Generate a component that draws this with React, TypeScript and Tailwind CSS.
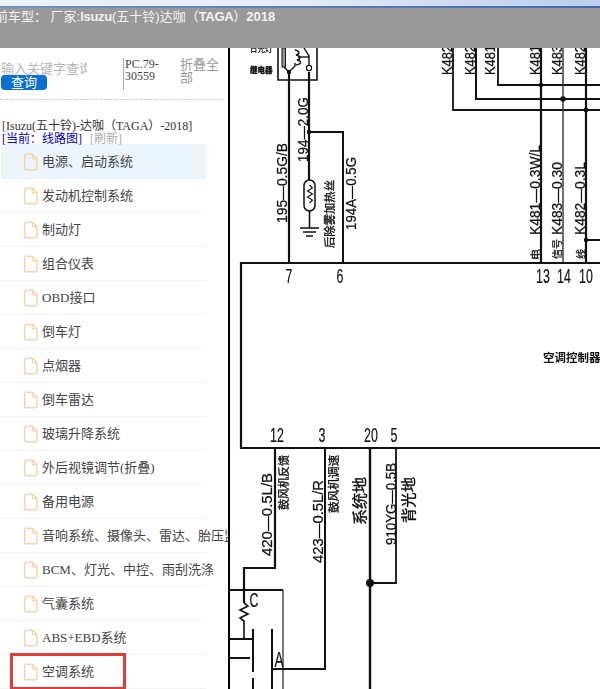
const items = [
  "电源、启动系统",
  "发动机控制系统",
  "制动灯",
  "组合仪表",
  "OBD接口",
  "倒车灯",
  "点烟器",
  "倒车雷达",
  "玻璃升降系统",
  "外后视镜调节(折叠)",
  "备用电源",
  "音响系统、摄像头、雷达、胎压监测",
  "BCM、灯光、中控、雨刮洗涤",
  "气囊系统",
  "ABS+EBD系统",
  "空调系统",
];

function FileIcon() {
  return (
    <svg width="16" height="18" viewBox="0 0 16 18" fill="none" className="shrink-0">
      <path
        d="M3.5 1.2h6l4.5 4.6v9.2a1.8 1.8 0 0 1-1.8 1.8H3.5a1.8 1.8 0 0 1-1.8-1.8V3a1.8 1.8 0 0 1 1.8-1.8z"
        stroke="#f8d5ad"
        strokeWidth="1.6"
      />
      <path d="M9.5 1.2v4.6H14" stroke="#f8d5ad" strokeWidth="1.4" />
    </svg>
  );
}

function V({ x, y, len, size = 15, children, heavy = 0.25 }: { x: number; y: number; len?: number; size?: number; children: string; heavy?: number }) {
  return (
    <text
      transform={`translate(${x} ${y}) rotate(-90)`}
      fontSize={size}
      fill="#111"
      stroke="#111"
      strokeWidth={heavy}
      fontFamily="'Liberation Sans','Noto Sans CJK SC',sans-serif"
      textLength={len}
      lengthAdjust={len ? "spacingAndGlyphs" : undefined}
    >
      {children}
    </text>
  );
}

function Pin({ x, y, size = 20, children }: { x: number; y: number; size?: number; children: string }) {
  return (
    <text
      fontSize={size}
      textAnchor="middle"
      fill="#111"
      stroke="#111"
      strokeWidth="0.2"
      fontFamily="'Liberation Sans',sans-serif"
      transform={`translate(${x} ${y}) scale(0.62 1)`}
    >
      {children}
    </text>
  );
}

function L({ d, w = 2.2, c = "#111" }: { d: string; w?: number; c?: string }) {
  return <path d={d} stroke={c} strokeWidth={w} fill="none" />;
}

function Diagram() {
  return (
    <svg viewBox="230 48 370 641" className="w-[370px] h-[641px] block blur-[0.4px]">
      <rect x="230" y="48" width="370" height="641" fill="#fff" />
      {/* relay */}
      <L d="M278 48V80H317V48" w={1.6} />
      <rect x="282" y="48" width="3.5" height="19" fill="#999" stroke="#111" strokeWidth="1" />
      <L d="M284 67L289 72L295 66V63" w={1.4} />
      <path d="M295 50c5 1 5 4 1 5c5 1 5 4 1 5c5 1 5 4-1 5" stroke="#111" strokeWidth="1.4" fill="none" />
      <L d="M298 57H309" w={1.4} />
      <L d="M304 48L309 56V65" w={1.4} />
      <L d="M289 72V263" w={2.2} />
      <L d="M309 72V180" w={2.2} />
      <L d="M309 132H343V263" w={2} />
      <circle cx="309" cy="68" r="2.6" fill="#fff" stroke="#111" strokeWidth="1.2" />
      <circle cx="289" cy="72" r="2.2" fill="#111" />
      <circle cx="309" cy="132" r="2.2" fill="#111" />
      <text x="250" y="52" fontSize="7.5" fontWeight="700" fill="#222" fontFamily="'Noto Sans CJK SC',sans-serif">日光灯</text>
      <text x="250" y="73" fontSize="7.5" fontWeight="900" fill="#111" stroke="#111" strokeWidth="0.3" fontFamily="'Noto Sans CJK SC',sans-serif">继电器</text>
      {/* heater */}
      <rect x="304" y="180" width="11" height="31" rx="5.5" fill="#fff" stroke="#111" strokeWidth="1.5" />
      <path d="M309.5 185l3 3-5 3 5 3-5 3 5 3-3 3" stroke="#111" strokeWidth="1.1" fill="none" />
      <L d="M309.5 211V228" w={1.6} />
      <L d="M300 228H319M303 232H316M306 236H313" w={1.3} />
      <V x={287} y={223} len={80}>195—0.5G/B</V>
      <V x={308} y={162} len={65}>194—2.0G</V>
      <V x={356} y={230} len={73}>194A—0.5G</V>
      <V x={334} y={248} len={68} size={11} heavy={0.35}>后除雾加热丝</V>
      {/* K48 bus */}
      <L d="M453 48V110H600" w={1.8} />
      <L d="M476 48V99H600" w={2} />
      <L d="M498 48V85H600" w={1.8} />
      <L d="M541 48V263" w={2.2} />
      <L d="M563 48V263" w={1.4} c="#333" />
      <L d="M586 48V263" w={2.2} />
      <L d="M586 240H600" w={2} />
      <circle cx="541" cy="85" r="2.2" fill="#111" />
      <circle cx="563" cy="99" r="2.8" fill="#111" />
      <circle cx="586" cy="110" r="2.4" fill="#111" />
      <circle cx="586" cy="240" r="2.2" fill="#111" />
      <V x={452} y={75} len={30}>K482</V>
      <V x={475} y={75} len={30}>K482</V>
      <V x={495} y={75} len={30}>K481</V>
      <V x={540} y={75} len={30}>K481</V>
      <V x={562} y={75} len={30}>K483</V>
      <V x={585} y={75} len={30}>K482</V>
      <V x={540} y={235} len={90}>K481—0.3W/L</V>
      <V x={562} y={235} len={73}>K483—0.30</V>
      <V x={585} y={235} len={73}>K482—0.3L</V>
      <V x={540} y={260} size={11} heavy={0.3}>电</V>
      <V x={561} y={259} size={10} heavy={0.3}>信号</V>
      <V x={585} y={259} size={10} heavy={0.3}>线</V>
      {/* controller box */}
      <L d="M600 263H241V448H600" w={2.2} />
      <text x="543" y="362" fontSize="11.5" fontWeight="700" fill="#111" fontFamily="'Noto Sans CJK SC',sans-serif">空调控制器</text>
      <Pin x={289} y={283}>7</Pin>
      <Pin x={340} y={283}>6</Pin>
      <Pin x={543} y={283}>13</Pin>
      <Pin x={564} y={283}>14</Pin>
      <Pin x={586} y={283}>10</Pin>
      <Pin x={277} y={442}>12</Pin>
      <Pin x={322} y={442}>3</Pin>
      <Pin x={371} y={442}>20</Pin>
      <Pin x={394} y={442}>5</Pin>
      {/* lower wiring */}
      <L d="M275 448V568H244V603" w={2.2} />
      <path d="M244 603l4 3-8 4 8 4-8 4 4 3V639" stroke="#111" strokeWidth="1.6" fill="none" />
      <L d="M230 590H283" w={1.8} />
      <L d="M283 590V689" w={1.4} c="#444" />
      <L d="M325 448V669H272" w={2} />
      <L d="M230 639H253M230 658H250" w={1.8} />
      <L d="M253 629V672M253 678V689M272 629V689" w={2} />
      <L d="M370 448V689" w={2.4} />
      <L d="M370 583H396V448" w={1.8} />
      <circle cx="370" cy="583" r="4" fill="#111" />
      <V x={272} y={556} len={83}>420—0.5L/B</V>
      <V x={288} y={510} len={55} size={11} heavy={0.35}>鼓风机反馈</V>
      <V x={323} y={563} len={83}>423—0.5L/R</V>
      <V x={338} y={513} len={58} size={11} heavy={0.35}>鼓风机调速</V>
      <V x={365} y={525} len={48} size={15} heavy={0.4}>系统地</V>
      <V x={396} y={545} len={82}>910YG—0.5B</V>
      <V x={414} y={523} len={46} size={15} heavy={0.4}>背光地</V>
      <Pin x={254} y={607} size={20}>C</Pin>
      <Pin x={279} y={667} size={22}>A</Pin>
    </svg>
  );
}

export default function App() {
  return (
    <div className="w-[600px] h-[689px] overflow-hidden bg-white flex flex-col [font-family:'Liberation_Serif','Noto_Sans_CJK_SC',serif]">
      <div className="h-[6px] bg-gradient-to-r from-[#eef2f8] via-[#e6ebf7] to-[#bccdec]" />
      <div className="h-[2px] bg-gradient-to-r from-[#7092cc] to-[#4169b8]" />
      <div className="h-[40px] bg-[#999999] overflow-hidden pt-[1px]">
        <div className="-ml-[5px] whitespace-nowrap text-[13px] leading-[15px] text-[#f2f2f2] [font-family:'Liberation_Sans','Noto_Sans_CJK_SC',sans-serif]">
          前车型： 厂家:<span className="font-bold tracking-[-0.3px]">Isuzu</span>(五十铃)达咖（<span className="font-bold tracking-[-0.3px]">TAGA</span>）<span className="font-bold">2018</span>
        </div>
      </div>
      <div className="flex flex-1 min-h-0">
        <aside className="relative w-[228px] shrink-0 overflow-hidden">
          <div className="flex h-[52px] pt-[10px] pl-[1px] border-b border-dashed border-[#cccccc] mr-[6px]">
            <div className="w-[122px] shrink-0">
              <div className="w-[86px] overflow-hidden whitespace-nowrap text-[13px] leading-[15px] text-[#b5b5b5] mt-[3px]">输入关键字查询</div>
              <div className="w-[46px] h-[15px] mt-[-1px] rounded-[4px] bg-[#0a6fd0] text-white text-[13px] leading-[15px] text-center">查询</div>
            </div>
            <div className="w-[57px] h-[32px] shrink-0 border-l border-[#aaaaaa] pl-[1px] text-[12px] leading-[12px] text-[#444]">PC.79-30559</div>
            <div className="w-[40px] text-[13px] leading-[13px] text-[#999]">折叠全部</div>
          </div>
          <div className="pt-[20px] pl-[2px] h-[45px] whitespace-nowrap">
            <div className="text-[12px] leading-[13px] text-[#333]">[Isuzu(五十铃)-达咖（TAGA）-2018]</div>
            <div className="text-[12px] leading-[12px]">
              <span className="text-[#0000cc]">[当前：线路图]</span><span className="text-[#aaaaaa] ml-[8px]">[刷新]</span>
            </div>
          </div>
          <ul className="w-[206px]">
            {items.map((t, i) => (
              <li
                key={t}
                className={
                  i === 0
                    ? "h-[35px] -mt-[1px] pt-[1px] ml-[1px] pl-[22px] flex items-center gap-[3px] whitespace-nowrap text-[13px] text-[#444] bg-[#edf5fc]"
                    : "h-[34px] flex items-center gap-[3px] pl-[23px] whitespace-nowrap text-[13px] text-[#444] border-b border-[#f4f4f4]"
                }
              >
                <FileIcon />
                <span>{t}</span>
              </li>
            ))}
          </ul>
          <div className="absolute left-[10px] top-[605px] w-[116px] h-[37px] border-[3px] border-[#e23b3b]" />
        </aside>
        <div className="w-[2px] shrink-0 bg-black" />
        <Diagram />
      </div>
    </div>
  );
}
